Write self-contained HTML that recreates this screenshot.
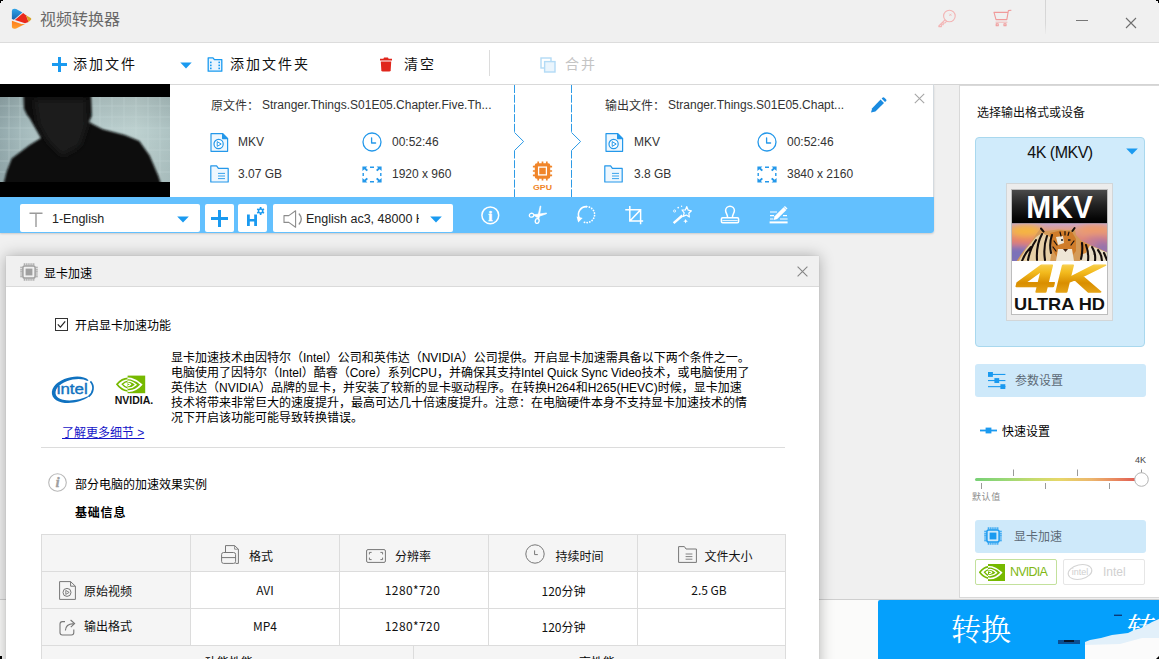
<!DOCTYPE html>
<html lang="zh-CN">
<head>
<meta charset="utf-8">
<title>视频转换器</title>
<style>
*{box-sizing:border-box;margin:0;padding:0}
html,body{width:1159px;height:659px;overflow:hidden;background:#f0f0f0}
body{position:relative;font-family:"Liberation Sans","Noto Sans CJK SC",sans-serif;font-size:12px;color:#222}
.abs{position:absolute}
.cjk{font-family:"Liberation Sans","Noto Sans CJK SC",sans-serif}
svg{display:block;overflow:visible}
/* title bar */
#titlebar{left:0;top:0;width:1159px;height:43px;background:#f0f0f0;border-bottom:1px solid #dcdcdc}
#apptitle{left:40px;top:9px;font-size:16px;color:#6a6a6a;line-height:22px;white-space:nowrap}
/* toolbar */
#toolbar{left:0;top:43px;width:1159px;height:42px;background:#fff;border-bottom:1px solid #d4d4d4}
.tbtxt{top:53px;font-size:14px;line-height:22px;color:#111;white-space:nowrap;letter-spacing:2px}
/* file item */
#item{left:0;top:85px;width:934px;height:148px;background:#fff;box-shadow:0 1px 2px rgba(0,0,0,.15);border-bottom-right-radius:3px}
#bluebar{left:0;top:197px;width:934px;height:36px;background:#63c0fe;border-bottom-right-radius:3px}
.itxt{font-size:12px;line-height:16px;color:#333;white-space:nowrap}
.wbox{background:#fff;height:28px;top:204px}
/* right panel */
#rpanel{left:959px;top:85px;width:201px;height:513px;background:#fff;border:1px solid #d9d9d9}
.lbtn{background:#cee9fa;border-radius:3px}
/* bottom */
#bottom{left:0;top:599px;width:1159px;height:60px;background:#fbfbfa;border-top:1px solid #cfcfcf}
#convert{left:878px;top:600px;width:281px;height:59px;background:#05a0fc;border-top-left-radius:2px}
/* dialog */
#dlg{left:6px;top:256px;width:813px;height:420px;background:#fff;box-shadow:0 0 14px rgba(0,0,0,.3),0 0 1px rgba(0,0,0,.12)}
#dlgtitle{left:0;top:0;width:813px;height:31px;background:#f0f0f0;border-bottom:1px solid #dadada}
.d12{font-size:12px;line-height:15px;color:#000;white-space:nowrap}
#tb1 td{width:149px;height:37px;border:1px solid #dcdcdc;text-align:center;vertical-align:middle;font-size:12px;color:#111;white-space:nowrap;background:#fff;padding:0}
#tb1 td.h{background:#f5f5f5}
#tb1 td.l{text-align:left;padding-left:17px}
#tb1 td:last-child{width:148px}
#tb1 .ic{display:inline-block;vertical-align:middle;margin-right:8px}
#tb1 span{vertical-align:middle}
#tb1 .dv{position:relative;font-family:"Noto Sans CJK SC","Liberation Sans",sans-serif}
table{border-collapse:collapse}
</style>
</head>
<body>
<!-- ===== title bar ===== -->
<div id="titlebar" class="abs"></div>
<svg class="abs" style="left:11px;top:8px" width="22" height="22" viewBox="0 0 22 22">
  <defs><linearGradient id="lgb" x1="0" y1="0" x2="0" y2="1"><stop offset="0" stop-color="#2fa4e8"/><stop offset="1" stop-color="#1a64b0"/></linearGradient>
  <linearGradient id="lgo" x1="0" y1="0" x2="0" y2="1"><stop offset="0" stop-color="#ff7a1a"/><stop offset="1" stop-color="#ffa030"/></linearGradient></defs>
  <path d="M0.9 3 Q0.9 0.9 3.4 0.8 L5.2 0.9 L11.4 4.4 L2.9 11.8 L0.9 11 Z" fill="url(#lgb)"/>
  <path d="M12.1 4.9 L15 7.2 L17.6 14 L14 15.3 L3.9 11.9 Z" fill="#ea2a1c"/>
  <path d="M15 7.2 L19.8 10 Q20.9 11 19.8 12 L17.6 14 Z" fill="#d9a428"/>
  <path d="M0.9 12.7 L10.5 16 L14 16 L5.2 20.5 Q1 21.4 0.9 19 Z" fill="url(#lgo)"/>
</svg>
<!-- key -->
<svg class="abs" style="left:938px;top:9px" width="18" height="18" viewBox="0 0 18 18" fill="none" stroke="#f3b4b4" stroke-width="1.1" stroke-linecap="round" stroke-linejoin="round">
  <circle cx="11.4" cy="7" r="5.8"/>
  <path d="M7 10.8 L0.8 17 L0.8 17.6 L3.4 17.6 L3.4 15.8 L5.2 15.8 L5.2 14 L7 14 L8.6 12.2"/>
  <path d="M11.6 5 L13.2 6.6 M13.2 5 L11.6 6.6" stroke-width="0.8"/>
</svg>
<!-- cart -->
<svg class="abs" style="left:993px;top:9px" width="19" height="18" viewBox="0 0 19 18" fill="none" stroke="#f09a9a" stroke-width="1.1" stroke-linecap="round" stroke-linejoin="round">
  <path d="M18 1.2 L15.4 1.6 L13.8 10.6 L3 10.6 L1 3.4 L14.8 3.4"/>
  <path d="M3 13.2 L14 13.2" stroke-width="0.9" stroke="#f3b0b0"/>
  <rect x="3.2" y="14.8" width="2" height="2"/>
  <rect x="11" y="14.8" width="2" height="2"/>
</svg>
<div class="abs" style="left:1045px;top:0;width:1px;height:34px;background:linear-gradient(#d4d4d4,#d8d8d8 70%,#ececec)"></div>
<div class="abs" style="left:1076px;top:20px;width:12px;height:1px;background:#777"></div>
<svg class="abs" style="left:1125px;top:17px" width="12" height="12" viewBox="0 0 12 12" stroke="#6e6e6e" stroke-width="1.1" fill="none"><path d="M1 1 L11 11 M11 1 L1 11"/></svg>
<!-- window corners -->
<div class="abs" style="left:0;top:0;width:3px;height:1px;background:#000"></div><div class="abs" style="left:0;top:0;width:1px;height:3px;background:#000"></div>
<div class="abs" style="left:1156px;top:0;width:3px;height:1px;background:#000"></div><div class="abs" style="left:1158px;top:0;width:1px;height:3px;background:#000"></div>
<div id="apptitle" class="abs">视频转换器</div>

<!-- ===== toolbar ===== -->
<div id="toolbar" class="abs"></div>
<!-- plus -->
<div class="abs" style="left:52px;top:63px;width:15px;height:3px;background:#1a9af0"></div>
<div class="abs" style="left:58px;top:57px;width:3px;height:15px;background:#1a9af0"></div>
<!-- arrow -->
<svg class="abs" style="left:180px;top:62px" width="12" height="7" viewBox="0 0 12 7"><path d="M0.3 0.6 L11.7 0.6 L6 6.4 Z" fill="#1a9af0"/></svg>
<!-- folder film -->
<svg class="abs" style="left:207px;top:57px" width="16" height="15" viewBox="0 0 16 15">
  <path d="M1.2 0.8 L6 0.8 L7.4 2.6 L14.8 2.6 L14.8 14.2 L1.2 14.2 Z" fill="#e9f5fe" stroke="#1a9af0" stroke-width="1.3" stroke-linejoin="round"/>
  <g fill="#1a9af0"><rect x="3" y="4.6" width="1.6" height="1.6"/><rect x="3" y="7.6" width="1.6" height="1.6"/><rect x="3" y="10.6" width="1.6" height="1.6"/>
  <rect x="11.4" y="4.6" width="1.6" height="1.6"/><rect x="11.4" y="7.6" width="1.6" height="1.6"/><rect x="11.4" y="10.6" width="1.6" height="1.6"/></g>
</svg>
<!-- trash -->
<svg class="abs" style="left:379px;top:57px" width="14" height="15" viewBox="0 0 14 15" fill="#e0261c">
  <path d="M4.4 1.8 L5 0.5 L9 0.5 L9.6 1.8 L13 1.8 L13 3.6 L1 3.6 L1 1.8 Z"/>
  <path d="M1.8 4.6 L12.2 4.6 L11.7 13.2 Q11.6 14.6 10.2 14.6 L3.8 14.6 Q2.4 14.6 2.3 13.2 Z"/>
</svg>
<!-- merge -->
<svg class="abs" style="left:540px;top:57px" width="16" height="16" viewBox="0 0 16 16" fill="none" stroke="#b3dbf6" stroke-width="1.4">
  <rect x="1" y="1" width="10" height="10"/><rect x="4.6" y="4.6" width="10.4" height="10.4" fill="#eaf5fd"/>
</svg>
<div class="abs tbtxt" style="left:73px">添加文件</div>
<div class="abs tbtxt" style="left:230px">添加文件夹</div>
<div class="abs tbtxt" style="left:404px">清空</div>
<div class="abs tbtxt" style="left:565px;color:#c4c4c4">合并</div>
<div class="abs" style="left:489px;top:50px;width:1px;height:26px;background:#dcdcdc"></div>

<!-- ===== file item ===== -->
<div id="item" class="abs"></div>
<!-- thumbnail -->
<svg class="abs" style="left:0;top:84px" width="170" height="113" viewBox="0 0 170 113">
  <defs><linearGradient id="tbg" x1="0" y1="0" x2="1" y2="0"><stop offset="0" stop-color="#94aaad"/><stop offset="0.12" stop-color="#a3b9bb"/><stop offset="0.24" stop-color="#b0c5c6"/><stop offset="0.55" stop-color="#b6cbcb"/><stop offset="0.8" stop-color="#bdd1d0"/><stop offset="1" stop-color="#aec3c3"/></linearGradient>
  <linearGradient id="tbv" x1="0" y1="0" x2="0" y2="1"><stop offset="0" stop-color="#000" stop-opacity="0.10"/><stop offset="0.4" stop-color="#000" stop-opacity="0"/><stop offset="1" stop-color="#000" stop-opacity="0.04"/></linearGradient>
  <filter id="tbl" x="-10%" y="-10%" width="120%" height="120%"><feGaussianBlur stdDeviation="1"/></filter>
  <filter id="tbl2" x="-20%" y="-20%" width="140%" height="140%"><feGaussianBlur stdDeviation="3"/></filter>
  <clipPath id="tclip"><rect x="0" y="13" width="170" height="85"/></clipPath></defs>
  <rect width="170" height="113" fill="#000"/>
  <g clip-path="url(#tclip)">
  <rect x="0" y="13" width="170" height="85" fill="url(#tbg)"/>
  <rect x="0" y="13" width="170" height="85" fill="url(#tbv)"/>
  <g stroke="#cfdedd" stroke-width="0.6" opacity="0.5"><path d="M0 22 H170 M0 33 H170 M0 44 H170 M0 55 H170 M0 66 H170 M0 77 H170 M0 88 H170 M9 13 V98 M20 13 V98 M100 13 V98 M112 13 V98 M124 13 V98 M136 13 V98 M148 13 V98 M160 13 V98"/></g>
  <g filter="url(#tbl)">
  <path d="M23.5 11 L24 24.7 L27 31 L29.5 34 L35.2 43.7 L41 54 L29.3 61.3 L11.7 74.5 L6.5 88 L3.6 100 L161 100 L158.4 92 L149.6 71.6 L139.3 57 L124.7 51 L102.7 45.2 L88.5 37.9 L91.7 32 L91 11 Z" fill="#0a0c0c"/>
  </g>
  <g filter="url(#tbl2)"><path d="M34 16 L86 16 L87 42 L80 62 L62 72 L48 58 L38 40 Z" fill="#1b1d1d"/></g>
  </g>
</svg>
<div class="abs" style="left:170px;top:84px;width:764px;height:1px;background:#d9d9d9"></div>
<div class="abs" style="left:933px;top:84px;width:1px;height:113px;background:#d4dadf"></div>
<!-- source -->
<div class="abs itxt" style="left:211px;top:98px">原文件：</div>
<div class="abs itxt" style="left:262px;top:97px">Stranger.Things.S01E05.Chapter.Five.Th...</div>
<svg class="abs" style="left:210px;top:133px" width="19" height="19" viewBox="0 0 19 19" fill="none" stroke="#2498ea" stroke-width="1.2" stroke-linejoin="round">
  <path d="M1 0.7 L12.6 0.7 L17.6 5.6 L17.6 18.3 L1 18.3 Z" fill="#eef7fe"/><path d="M12.6 0.7 L12.6 5.6 L17.6 5.6 Z" fill="#2498ea"/>
  <circle cx="8.6" cy="11" r="4.6" fill="#fff"/><path d="M7.2 8.6 L11.2 11 L7.2 13.4 Z" stroke-width="1"/></svg>
<div class="abs itxt" style="left:238px;top:134px">MKV</div>
<svg class="abs" style="left:362px;top:132px" width="20" height="20" viewBox="0 0 20 20" fill="none" stroke="#2498ea" stroke-width="1.3" stroke-linecap="round" stroke-linejoin="round">
  <circle cx="10" cy="10" r="9"/><path d="M9.6 5.8 L9.6 11 L13.6 11"/></svg>
<div class="abs itxt" style="left:392px;top:134px">00:52:46</div>
<svg class="abs" style="left:210px;top:165px" width="19" height="18" viewBox="0 0 19 18" fill="none" stroke="#2498ea" stroke-width="1.2" stroke-linejoin="round">
  <path d="M0.8 0.8 L6.6 0.8 L8.4 3.4 L18.2 3.4 L18.2 17 L0.8 17 Z" fill="#eef7fe"/>
  <path d="M8 8.4 L15 8.4 M8 11 L15 11 M8 13.6 L15 13.6" stroke-width="0.9"/></svg>
<div class="abs itxt" style="left:238px;top:166px">3.07 GB</div>
<svg class="abs" style="left:362px;top:166px" width="20" height="17" viewBox="0 0 20 17" fill="none" stroke="#2498ea" stroke-width="1.4">
  <path d="M8 1.2 L12 1.2 M8 15.8 L12 15.8 M1.2 7 L1.2 10 M18.8 7 L18.8 10"/>
  <g fill="#2498ea" stroke="none"><path d="M0.4 0.4 L5.4 0.4 L3.9 1.9 L6 4 L4.6 5.2 L2.4 3.2 L0.4 5 Z"/>
  <path d="M19.6 0.4 L14.6 0.4 L16.1 1.9 L14 4 L15.4 5.2 L17.6 3.2 L19.6 5 Z"/>
  <path d="M0.4 16.6 L5.4 16.6 L3.9 15.1 L6 13 L4.6 11.8 L2.4 13.8 L0.4 12 Z"/>
  <path d="M19.6 16.6 L14.6 16.6 L16.1 15.1 L14 13 L15.4 11.8 L17.6 13.8 L19.6 12 Z"/></g></svg>
<div class="abs itxt" style="left:392px;top:166px">1920 x 960</div>
<!-- dashed separators -->
<svg class="abs" style="left:510px;top:85px" width="80" height="112" viewBox="0 0 80 112" fill="none" stroke="#2e9be6" stroke-width="1">
  <path d="M4.5 0 V47.5 M4.5 65.5 V112" stroke-dasharray="8 1.7"/><path d="M4.5 47.5 L13.6 56.5 L4.5 65.5"/>
  <path d="M61.5 0 V47.5 M61.5 65.5 V112" stroke-dasharray="8 1.7"/><path d="M61.5 47.5 L70.6 56.5 L61.5 65.5"/>
</svg>
<!-- GPU -->
<svg class="abs" style="left:532px;top:161px" width="21" height="30" viewBox="0 0 21 30">
  <g stroke="#f0852a" stroke-width="1.7" fill="none"><path d="M6.2 0.4 V3 M10.5 0.4 V3 M14.8 0.4 V3 M6.2 17 V19.6 M10.5 17 V19.6 M14.8 17 V19.6 M0.9 5.7 H3.5 M0.9 10 H3.5 M0.9 14.3 H3.5 M17.5 5.7 H20.1 M17.5 10 H20.1 M17.5 14.3 H20.1"/></g>
  <rect x="2.8" y="2.3" width="15.4" height="15.4" rx="2" fill="#f0852a"/><rect x="6.6" y="6.1" width="7.8" height="7.8" fill="#f0852a" stroke="#fff" stroke-width="1.3"/>
  <text x="10.5" y="28.8" text-anchor="middle" font-family="Liberation Sans, sans-serif" font-weight="bold" font-size="7.6" fill="#f0852a" textLength="19" lengthAdjust="spacingAndGlyphs">GPU</text>
</svg>
<!-- output -->
<div class="abs itxt" style="left:605px;top:98px">输出文件：</div>
<div class="abs itxt" style="left:668px;top:97px">Stranger.Things.S01E05.Chapt...</div>
<svg class="abs" style="left:870px;top:97px" width="17" height="16" viewBox="0 0 17 16" fill="#1a8be0">
  <path d="M10.6 2.6 L14 6 L5.4 14.4 L1 15.6 L2.2 11.2 Z"/><path d="M11.6 1.6 L12.8 0.5 Q13.6 0 14.4 0.7 L16.2 2.5 Q16.8 3.3 16.2 4 L15 5 Z"/></svg>
<svg class="abs" style="left:913.5px;top:93.3px" width="11" height="11" viewBox="0 0 11 11" stroke="#a6a6a6" stroke-width="1.1" fill="none"><path d="M0.8 0.8 L10.2 10.2 M10.2 0.8 L0.8 10.2"/></svg>
<svg class="abs" style="left:605px;top:133px" width="19" height="19" viewBox="0 0 19 19" fill="none" stroke="#2498ea" stroke-width="1.2" stroke-linejoin="round">
  <path d="M1 0.7 L12.6 0.7 L17.6 5.6 L17.6 18.3 L1 18.3 Z" fill="#eef7fe"/><path d="M12.6 0.7 L12.6 5.6 L17.6 5.6 Z" fill="#2498ea"/>
  <circle cx="8.6" cy="11" r="4.6" fill="#fff"/><path d="M7.2 8.6 L11.2 11 L7.2 13.4 Z" stroke-width="1"/></svg>
<div class="abs itxt" style="left:634px;top:134px">MKV</div>
<svg class="abs" style="left:757px;top:132px" width="20" height="20" viewBox="0 0 20 20" fill="none" stroke="#2498ea" stroke-width="1.3" stroke-linecap="round" stroke-linejoin="round">
  <circle cx="10" cy="10" r="9"/><path d="M9.6 5.8 L9.6 11 L13.6 11"/></svg>
<div class="abs itxt" style="left:787px;top:134px">00:52:46</div>
<svg class="abs" style="left:604px;top:165px" width="19" height="18" viewBox="0 0 19 18" fill="none" stroke="#2498ea" stroke-width="1.2" stroke-linejoin="round">
  <path d="M0.8 0.8 L6.6 0.8 L8.4 3.4 L18.2 3.4 L18.2 17 L0.8 17 Z" fill="#eef7fe"/>
  <path d="M8 8.4 L15 8.4 M8 11 L15 11 M8 13.6 L15 13.6" stroke-width="0.9"/></svg>
<div class="abs itxt" style="left:634px;top:166px">3.8 GB</div>
<svg class="abs" style="left:757px;top:166px" width="20" height="17" viewBox="0 0 20 17" fill="none" stroke="#2498ea" stroke-width="1.4">
  <path d="M8 1.2 L12 1.2 M8 15.8 L12 15.8 M1.2 7 L1.2 10 M18.8 7 L18.8 10"/>
  <g fill="#2498ea" stroke="none"><path d="M0.4 0.4 L5.4 0.4 L3.9 1.9 L6 4 L4.6 5.2 L2.4 3.2 L0.4 5 Z"/>
  <path d="M19.6 0.4 L14.6 0.4 L16.1 1.9 L14 4 L15.4 5.2 L17.6 3.2 L19.6 5 Z"/>
  <path d="M0.4 16.6 L5.4 16.6 L3.9 15.1 L6 13 L4.6 11.8 L2.4 13.8 L0.4 12 Z"/>
  <path d="M19.6 16.6 L14.6 16.6 L16.1 15.1 L14 13 L15.4 11.8 L17.6 13.8 L19.6 12 Z"/></g></svg>
<div class="abs itxt" style="left:787px;top:166px">3840 x 2160</div>
<div id="bluebar" class="abs"></div>
<div class="abs wbox" style="left:20px;width:180px;border-radius:2px"></div>
<svg class="abs" style="left:29px;top:212px" width="14" height="15" viewBox="0 0 14 15" fill="none" stroke="#9a9a9a" stroke-width="1.4"><path d="M0.5 1.2 H13.5 M7 1.2 V15"/></svg>
<div class="abs" style="left:52px;top:211px;font-size:12.5px;line-height:16px;color:#222;white-space:nowrap">1-English</div>
<svg class="abs" style="left:177px;top:216px" width="12" height="7" viewBox="0 0 12 7"><path d="M0.2 0.6 L11.8 0.6 L6 6.6 Z" fill="#1a9af0"/></svg>
<div class="abs wbox" style="left:205px;width:29px;border-radius:2px"></div>
<div class="abs" style="left:211px;top:217px;width:17px;height:3px;background:#1a9af0"></div>
<div class="abs" style="left:218px;top:210px;width:3px;height:17px;background:#1a9af0"></div>
<div class="abs wbox" style="left:238px;width:29px;border-radius:2px"></div>
<svg class="abs" style="left:246px;top:206px" width="20" height="21" viewBox="0 0 20 21">
  <path d="M1 8.6 H3.8 V13 H8.2 V8.6 H11 V20 H8.2 V15.4 H3.8 V20 H1 Z" fill="#1a9af0"/>
  <g transform="translate(14.6,5)" fill="#1a9af0"><circle r="2.8"/><g stroke="#1a9af0" stroke-width="1.7"><path d="M0 -3.9 V3.9 M-3.38 -1.95 L3.38 1.95 M-3.38 1.95 L3.38 -1.95"/></g><circle r="1.35" fill="#fff"/></g>
</svg>
<div class="abs wbox" style="left:273px;width:180px;border-radius:2px"></div>
<svg class="abs" style="left:283px;top:210px" width="22" height="18" viewBox="0 0 22 18" fill="none" stroke="#8c8c8c" stroke-width="1.1" stroke-linejoin="round"><path d="M1 5.6 H5.8 L12.6 0.8 V17.2 L5.8 12.4 H1 Z"/><path d="M16.2 4 Q20.4 9 16.2 14" stroke-linecap="round" stroke-width="1.3"/></svg>
<div class="abs" style="left:306px;top:211px;width:113px;overflow:hidden;font-size:12.5px;line-height:16px;color:#222;white-space:nowrap">English ac3, 48000 Hz</div>
<svg class="abs" style="left:430px;top:216px" width="12" height="7" viewBox="0 0 12 7"><path d="M0.2 0.6 L11.8 0.6 L6 6.6 Z" fill="#1a9af0"/></svg>
<!-- bar icons -->
<svg class="abs" style="left:481px;top:206px" width="19" height="19" viewBox="0 0 19 19"><circle cx="9.3" cy="9.3" r="8.4" fill="none" stroke="#fff" stroke-width="1.5"/><text x="9.3" y="14.6" text-anchor="middle" font-family="Liberation Serif, serif" font-weight="bold" font-size="15" fill="#fff" stroke="#fff" stroke-width="0.5">i</text></svg>
<svg class="abs" style="left:528px;top:205px" width="20" height="20" viewBox="0 0 20 20" fill="none" stroke="#fff" stroke-width="1.3"><ellipse cx="3.6" cy="10.2" rx="2.3" ry="1.9" transform="rotate(-15 3.6 10.2)"/><ellipse cx="9.2" cy="16" rx="1.9" ry="2.4" transform="rotate(15 9.2 16)"/><path d="M5.6 9.8 L18.6 8 L18.4 8.8 L8.6 12.2 Z M9.4 13.8 L12.2 1 L12.9 1.2 L11 13.6 Z" fill="#fff" stroke-width="0.7" stroke-linejoin="round"/></svg>
<svg class="abs" style="left:576px;top:205px" width="20" height="20" viewBox="0 0 20 20" fill="none" stroke="#fff" stroke-width="1.6" stroke-linecap="round"><path d="M10.6 1.6 A8 8 0 0 0 3.4 13.4"/><path d="M10.6 1.6 A8 8 0 0 1 10.6 17.6 A8 8 0 0 1 7.6 17" stroke-dasharray="0.2 2.5" stroke-width="1.7"/><path d="M0.6 11.6 L6.6 13 L2.2 17.4 Z" fill="#fff" stroke="none"/></svg>
<svg class="abs" style="left:625px;top:206px" width="19" height="19" viewBox="0 0 19 19" fill="none" stroke="#fff" stroke-width="1.5" stroke-linecap="square"><path d="M4.8 0.8 V15 H17.4 M1 3.8 H15.6 V17.6 M5.4 14.4 L15 4.4"/></svg>
<svg class="abs" style="left:672px;top:205px" width="20" height="20" viewBox="0 0 20 20" fill="#fff" stroke="none"><path d="M0.8 17.2 L9.6 9.6 L11.2 11.4 L2.4 19 Z"/><path d="M14.8 1.6 L16.2 5.2 L19.4 5.8 L16.8 8.2 L17.4 12 L14.4 10 L11.2 11.4 L12.2 7.8 L10 5 L13.4 5 Z" fill="none" stroke="#fff" stroke-width="1.2" stroke-linejoin="round"/><circle cx="6.2" cy="2.6" r="0.9"/><circle cx="2.6" cy="6" r="1.1" fill="none" stroke="#fff" stroke-width="0.8"/><circle cx="9.6" cy="1.2" r="0.7"/><path d="M13.6 14 L14.4 15.6 L16 16.2 L14.4 16.8 L13.6 18.4 L12.8 16.8 L11.2 16.2 L12.8 15.6 Z"/></svg>
<svg class="abs" style="left:720px;top:205px" width="20" height="20" viewBox="0 0 20 20" fill="none" stroke="#fff" stroke-width="1.5" stroke-linejoin="round"><path d="M7.4 12.8 C8.2 9.6 5.6 8.8 5.6 5.6 A4.4 4.4 0 0 1 14.4 5.6 C14.4 8.8 11.8 9.6 12.6 12.8"/><rect x="1.4" y="12.8" width="17.2" height="5" rx="1.2"/><path d="M2.4 15.6 H17.6" stroke-width="0.9"/></svg>
<svg class="abs" style="left:769px;top:205px" width="20" height="20" viewBox="0 0 20 20" fill="none" stroke="#fff" stroke-width="1.2"><path d="M0.6 17.4 H18.6" stroke-width="2"/><path d="M1 7 H8 M1 10.6 H5 M1 14 H4.4 M14 10.6 H18 M11 14 H18.6"/><path d="M14.6 2.2 L17.4 5 L8.2 14 L4.6 15 L5.6 11.2 Z" fill="#fff" stroke="none"/><path d="M15.4 1.4 L18 4" stroke-width="1.4"/></svg>
<!-- ===== right panel ===== -->
<div id="rpanel" class="abs"></div>
<div class="abs d12" style="left:977px;top:106px;color:#111">选择输出格式或设备</div>
<div class="abs" style="left:975px;top:137px;width:170px;height:210px;background:#d0ebfb;border:1px solid #a9d8ee;border-radius:4px"></div>
<div class="abs" style="left:1010px;top:143px;width:100px;text-align:center;font-size:16px;line-height:20px;letter-spacing:-0.5px;color:#111;white-space:nowrap">4K (MKV)</div>
<svg class="abs" style="left:1126px;top:148px" width="12" height="7" viewBox="0 0 12 7"><path d="M0.2 0.4 L11.8 0.4 L6 6.4 Z" fill="#1a9af0"/></svg>
<!-- MKV 4K icon -->
<svg class="abs" style="left:1006px;top:183px" width="107" height="138" viewBox="0 0 107 138">
  <defs>
    <linearGradient id="mk" x1="0" y1="0" x2="0" y2="1"><stop offset="0" stop-color="#4a4a4a"/><stop offset="0.45" stop-color="#222"/><stop offset="0.85" stop-color="#060606"/><stop offset="1" stop-color="#000"/></linearGradient>
    <linearGradient id="sky" x1="0" y1="0" x2="0" y2="1"><stop offset="0" stop-color="#c8a4cc"/><stop offset="0.15" stop-color="#e0a08c"/><stop offset="0.4" stop-color="#e08878"/><stop offset="0.65" stop-color="#b07aa0"/><stop offset="1" stop-color="#8a74b4"/></linearGradient>
    <linearGradient id="gold" x1="0" y1="0" x2="0" y2="1"><stop offset="0" stop-color="#fbe27a"/><stop offset="0.35" stop-color="#f3bb1e"/><stop offset="0.6" stop-color="#d98e00"/><stop offset="1" stop-color="#f0b62a"/></linearGradient>
    <filter id="b1" x="-10%" y="-10%" width="120%" height="120%"><feGaussianBlur stdDeviation="0.45"/></filter><filter id="b2" x="-30%" y="-30%" width="160%" height="160%"><feGaussianBlur stdDeviation="3"/></filter>
  </defs>
  <rect x="0.5" y="0.5" width="106" height="137" fill="#ececec" stroke="#d2d6d8"/>
  <rect x="5.5" y="6.5" width="96" height="125" fill="#fff" stroke="#bdbdbd"/>
  <rect x="6" y="7" width="95" height="33.5" fill="url(#mk)"/>
  <text x="53.5" y="34.6" text-anchor="middle" font-family="Liberation Sans, sans-serif" font-weight="bold" font-size="31" fill="#fff" textLength="66.5" lengthAdjust="spacingAndGlyphs">MKV</text>
  <rect x="6" y="40.5" width="95" height="37.5" fill="url(#sky)"/>
  <clipPath id="tgc"><rect x="6" y="40.5" width="95" height="37.5"/></clipPath>
  <g clip-path="url(#tgc)">
  <g filter="url(#b2)">
    <ellipse cx="20" cy="48" rx="16" ry="6" fill="#f6b640"/>
    <ellipse cx="16" cy="58" rx="14" ry="4" fill="#e8806a"/>
    <ellipse cx="12" cy="72" rx="14" ry="9" fill="#7c72b8"/>
    <ellipse cx="88" cy="47" rx="16" ry="5" fill="#ee9a6a"/>
    <ellipse cx="92" cy="57" rx="12" ry="4" fill="#c07a98"/>
    <ellipse cx="97" cy="64" rx="8" ry="4" fill="#8a72b0"/>
  </g>
  <g filter="url(#b1)">
    <path d="M10 79 L16 70 L24 60 L31 50 L35 45 L37.5 48 L44 47.5 L52 46.5 L60 47 L66 47 L68.6 44.6 L70 52 L76 58 L84 62 L94 66 L102 70 L102 79 Z" fill="#d49a58"/>
    <path d="M12 79 L20 66 L30 54 L36 50 L44 54 L46 66 L44 79 Z" fill="#e6cfa6"/>
    <path d="M44 50 L54 47.5 L66 49 L70 56 L70 68 L64 76 L52 76 L46 66 Z" fill="#cf7c2c"/>
    <path d="M50 54 L57 53 L58 60 L52 62 Z M52 66 L66 66 L68 78 L50 78 Z" fill="#efe6d6"/>
    <path d="M78 60 L102 70 L102 79 L74 79 Z" fill="#e8dcc6"/>
    <path d="M74 58 L84 62 L80 70 L74 72 Z" fill="#d98a3a"/>
    <g stroke="#15100c" stroke-width="2.1" fill="none" stroke-linecap="round">
      <path d="M36 51 Q30 62 31 77 M41 53 Q37 64 39 77 M30 57 Q24 66 22 77 M25 64 Q19 70 16 78 M46 52 Q43 60 45 70"/>
      <path d="M80 62 Q83 70 82 78 M86 64 Q90 70 89 78 M92 67 Q96 72 96 78 M98 70 L101 77 M76 60 Q77 68 75 76"/>
      <path d="M35 45.5 L37.6 48.6 M68.6 45 L66.4 48" stroke-width="2"/>
      <path d="M54 49 L55 53 M59 48.5 L59 52 M63 49 L62 52.5 M48 58 L51 62 M68 58 L65 62 M47 64 L50 68" stroke-width="1.2"/>
    </g>
    <path d="M55 57 L57 57 M62 57 L64.5 57" stroke="#1a1a1a" stroke-width="1.4"/>
    <path d="M57 66 L62 66 L59.5 69 Z" fill="#3a2018"/>
  </g>
  </g>
  <rect x="6" y="78" width="95" height="53" fill="#fff"/>
  <g transform="translate(51.6,109) scale(1.74,1) skewX(-8)"><text x="0" y="0" text-anchor="middle" font-family="Liberation Sans, sans-serif" font-weight="bold" font-size="39" fill="url(#gold)" stroke="url(#gold)" stroke-width="1.3" stroke-linejoin="round">4K</text></g>
  <text x="53.5" y="127.4" text-anchor="middle" font-family="Liberation Sans, sans-serif" font-weight="bold" font-size="16.4" fill="#111" textLength="91" lengthAdjust="spacingAndGlyphs">ULTRA HD</text>
</svg>
<!-- param settings -->
<div class="abs lbtn" style="left:975px;top:364px;width:171px;height:33px"></div>
<svg class="abs" style="left:988px;top:372px" width="18" height="17" viewBox="0 0 18 17" fill="#1a9af0"><rect x="0" y="1.9" width="17.4" height="1.1"/><rect x="0" y="8" width="17.4" height="1.1"/><rect x="0" y="14.1" width="17.4" height="1.1"/><rect x="0" y="0" width="4.9" height="4.9"/><rect x="6.4" y="6.1" width="4.8" height="4.9"/><rect x="12.4" y="12.2" width="4.9" height="4.8"/></svg>
<div class="abs d12" style="left:1015px;top:374px;color:#5c6a76">参数设置</div>
<!-- quick settings -->
<svg class="abs" style="left:980px;top:426px" width="17" height="9" viewBox="0 0 17 9" fill="#1a9af0"><rect x="0" y="3.6" width="17" height="1.8"/><rect x="5.6" y="1.6" width="5.8" height="5.8"/></svg>
<div class="abs d12" style="left:1002px;top:425px;color:#000">快速设置</div>
<div class="abs" style="left:1135px;top:454px;font-size:9px;line-height:12px;color:#444;white-space:nowrap">4K</div>
<div class="abs" style="left:975px;top:478px;width:161px;height:3px;border-radius:2px;background:linear-gradient(90deg,#6ccc6a 0%,#8fd46a 18%,#c4d860 38%,#e4d45c 52%,#eab060 72%,#e67a50 88%,#de4e44 100%);opacity:.92"></div>
<svg class="abs" style="left:975px;top:468px" width="176" height="24" viewBox="0 0 176 24" stroke="#9a9a9a" stroke-width="1" fill="none"><path d="M38.5 1.5 V8 M102.5 1.5 V8 M166.5 1.5 V5 M6.5 15 V21 M70.5 15 V21 M134.5 15 V21"/><circle cx="166.5" cy="11.5" r="6.8" fill="#fff" stroke="#b4b4b4"/></svg>
<div class="abs" style="left:972px;top:491px;font-size:9px;line-height:12px;color:#8a8a8a;white-space:nowrap;letter-spacing:0.6px">默认值</div>
<!-- gpu accel -->
<div class="abs lbtn" style="left:975px;top:520px;width:171px;height:33px"></div>
<svg class="abs" style="left:983.5px;top:527.2px" width="18" height="18" viewBox="0 0 18 18"><path d="M4.30 0.2 V2.6 M4.30 15.4 V17.8 M0.2 4.30 H2.6 M15.4 4.30 H17.8 M6.20 0.2 V2.6 M6.20 15.4 V17.8 M0.2 6.20 H2.6 M15.4 6.20 H17.8 M8.10 0.2 V2.6 M8.10 15.4 V17.8 M0.2 8.10 H2.6 M15.4 8.10 H17.8 M10.00 0.2 V2.6 M10.00 15.4 V17.8 M0.2 10.00 H2.6 M15.4 10.00 H17.8 M11.90 0.2 V2.6 M11.90 15.4 V17.8 M0.2 11.90 H2.6 M15.4 11.90 H17.8 M13.80 0.2 V2.6 M13.80 15.4 V17.8 M0.2 13.80 H2.6 M15.4 13.80 H17.8 " stroke="#1a9af0" stroke-width="1.05" fill="none"/><rect x="2.9" y="2.9" width="12.2" height="12.2" rx="1.8" fill="#cee9fa" stroke="#1a9af0" stroke-width="1.5"/><rect x="5.6" y="5.6" width="6.8" height="6.8" fill="#1a9af0"/></svg>
<div class="abs d12" style="left:1014px;top:530px;color:#5c6a76">显卡加速</div>
<div class="abs" style="left:975px;top:559px;width:82px;height:26px;background:#fff;border:1px solid #c3e19c;border-radius:2px"></div>
<svg class="abs" style="left:979px;top:564px" width="26" height="17" viewBox="0 0 26 17">
  <defs><clipPath id="nvL2"><rect x="0" y="0" width="9" height="17"/></clipPath><clipPath id="nvR2"><rect x="9" y="0" width="17" height="17"/></clipPath>
  </defs>
  <rect x="9" y="0" width="17" height="17" fill="#76b900"/>
  <g fill="none" stroke="#76b900" clip-path="url(#nvL2)"><path d="M0.8 8.2 Q6 1.6 13 3 Q18.4 4.4 22.4 8.6 Q16.6 15 10.4 14.4 Q4.4 13.4 0.8 8.2 Z" stroke-width="1.6"/><path d="M5.4 8.2 Q8.8 4.8 12.6 5.6 Q15.4 6.4 17.6 8.8 Q14 11.9 10.4 11.6 Q7.4 11 5.4 8.2 Z" stroke-width="1.3"/><path d="M9.6 7.4 Q11.8 6.8 12.8 8.4 Q11.8 9.8 10 9.5" stroke-width="1.2"/></g>
  <g fill="none" stroke="#fff" clip-path="url(#nvR2)"><path d="M0.8 8.2 Q6 1.6 13 3 Q18.4 4.4 22.4 8.6 Q16.6 15 10.4 14.4 Q4.4 13.4 0.8 8.2 Z" stroke-width="1.6"/><path d="M5.4 8.2 Q8.8 4.8 12.6 5.6 Q15.4 6.4 17.6 8.8 Q14 11.9 10.4 11.6 Q7.4 11 5.4 8.2 Z" stroke-width="1.3"/><path d="M9.6 7.4 Q11.8 6.8 12.8 8.4 Q11.8 9.8 10 9.5" stroke-width="1.2"/></g>
</svg>
<div class="abs" style="left:1010px;top:565px;font-size:12.5px;line-height:15px;color:#80b814;letter-spacing:-0.75px;white-space:nowrap">NVIDIA</div>
<div class="abs" style="left:1063px;top:559px;width:82px;height:26px;background:#fff;border:1px solid #e6e6e6;border-radius:2px"></div>
<svg class="abs" style="left:1067px;top:563px" width="26" height="18" viewBox="0 0 26 18"><ellipse cx="13" cy="9" rx="12" ry="7.2" fill="none" stroke="#d4d4d4" stroke-width="1.1" transform="rotate(-12 13 9)"/><text x="13" y="12" text-anchor="middle" font-family="Liberation Sans, sans-serif" font-size="9" fill="#cfcfcf">intel</text></svg>
<div class="abs" style="left:1103px;top:565px;font-size:12px;line-height:15px;color:#d0d0d0;white-space:nowrap">Intel</div>

<!-- ===== bottom ===== -->
<div id="bottom" class="abs"></div>
<div id="convert" class="abs"></div>
<div class="abs" style="left:951px;top:610px;font-family:'Liberation Serif','Noto Serif CJK SC',serif;font-size:30px;line-height:40px;color:#fff;white-space:nowrap;letter-spacing:0px">转换</div>

<!-- glitch artifacts bottom-right -->
<div class="abs" style="left:1126px;top:609px;width:33px;height:40px;overflow:hidden;font-family:'Liberation Serif','Noto Serif CJK SC',serif;font-size:30px;line-height:40px;color:#fff;white-space:nowrap"><span style="display:inline-block;transform:skewX(-8deg)">转换</span></div>
<svg class="abs" style="left:1050px;top:610px" width="109" height="49" viewBox="0 0 109 49">
  <path d="M35 32 L40 30 L51 28 L62 25 L78 23 L84 20 L91 18 L97 15 L102 12 L109 9 L109 49 L35 49 Z" fill="#e2f0fa"/>
  <path d="M35 35 L70 34 L92 28 L109 28 L109 49 L35 49 Z" fill="#fbfbfb"/>
  <rect x="8" y="30" width="22" height="4" fill="#0b3a78" opacity="0.8"/><rect x="14" y="30" width="10" height="2" fill="#04142c"/>
  <rect x="64" y="4.6" width="8" height="1.4" fill="#0b3a78"/>
  <path d="M106 49 L109 46 L109 49 Z" fill="#000"/>
</svg>
<div class="abs" style="left:0;top:656px;width:2px;height:3px;background:#000"></div>
<!-- ===== dialog ===== -->
<div id="dlg" class="abs">
  <div id="dlgtitle" class="abs"></div>
  <svg class="abs" style="left:14px;top:6.8px" width="18" height="18" viewBox="0 0 18 18"><path d="M4.30 0.2 V2.6 M4.30 15.4 V17.8 M0.2 4.30 H2.6 M15.4 4.30 H17.8 M6.20 0.2 V2.6 M6.20 15.4 V17.8 M0.2 6.20 H2.6 M15.4 6.20 H17.8 M8.10 0.2 V2.6 M8.10 15.4 V17.8 M0.2 8.10 H2.6 M15.4 8.10 H17.8 M10.00 0.2 V2.6 M10.00 15.4 V17.8 M0.2 10.00 H2.6 M15.4 10.00 H17.8 M11.90 0.2 V2.6 M11.90 15.4 V17.8 M0.2 11.90 H2.6 M15.4 11.90 H17.8 M13.80 0.2 V2.6 M13.80 15.4 V17.8 M0.2 13.80 H2.6 M15.4 13.80 H17.8 " stroke="#a0a0a0" stroke-width="1.05" fill="none"/><rect x="2.9" y="2.9" width="12.2" height="12.2" rx="1.8" fill="#f0f0f0" stroke="#a0a0a0" stroke-width="1.5"/><rect x="5.6" y="5.6" width="6.8" height="6.8" fill="#a0a0a0"/></svg>
  <div class="abs d12" style="left:38px;top:11px">显卡加速</div>
  <svg class="abs" style="left:791px;top:10px" width="11" height="11" viewBox="0 0 11 11" stroke="#858585" stroke-width="1.1" fill="none"><path d="M0.6 0.6 L10.4 10.4 M10.4 0.6 L0.6 10.4"/></svg>
  <!-- checkbox -->
  <div class="abs" style="left:49px;top:62px;width:13px;height:13px;border:1px solid #333;background:#fff"></div>
  <svg class="abs" style="left:49px;top:62px" width="13" height="13" viewBox="0 0 13 13" fill="none" stroke="#222" stroke-width="1.2"><path d="M2.8 6.4 L5.4 9.2 L10.2 3.4"/></svg>
  <div class="abs d12" style="left:69px;top:63px">开启显卡加速功能</div>
  <!-- logos -->
  <svg class="abs" style="left:44px;top:119px" width="46" height="30" viewBox="0 0 46 30">
    <path d="M38.6 5.2 C32 -1.6 12 1.4 4 11.4 C-1 18.4 3 25.4 12 27.4 C21 29.2 32 26.6 39 21.6 L38.4 21 C31 24.8 21 26.4 13 24.8 C6 23.2 3.4 18.4 7.4 12.6 C13.6 4.4 31 1.6 37.4 6 Z" fill="#1072c0"/>
    <path d="M40.4 6.4 C44.6 11 43.6 17.6 38.6 21.6" fill="none" stroke="#1072c0" stroke-width="1.7"/>
    <text x="22.2" y="19.4" text-anchor="middle" font-family="Liberation Sans, sans-serif" font-size="15.5" fill="#1072c0" stroke="#1072c0" stroke-width="0.4" textLength="31" lengthAdjust="spacingAndGlyphs">intel</text>
  </svg>
  <svg class="abs" style="left:108px;top:119px" width="40" height="30" viewBox="0 0 40 30">
    <defs><clipPath id="nvL"><rect x="0" y="0" width="13.6" height="20"/></clipPath><clipPath id="nvR"><rect x="13.6" y="0.6" width="17.6" height="17.6"/></clipPath>
    </defs>
    <rect x="13.6" y="0.6" width="17.6" height="17.6" fill="#76b900"/>
    <g fill="none" stroke="#76b900" clip-path="url(#nvL)"><path d="M3 9.2 Q9 2 17 3.6 Q23 5.2 27.4 9.6 Q21 16.6 14 16 Q7 15 3 9.2 Z" stroke-width="1.7"/><path d="M8.2 9.2 Q12 5.4 16.4 6.4 Q19.6 7.4 22 9.8 Q18 13.4 14 13 Q10.6 12.4 8.2 9.2 Z" stroke-width="1.4"/><path d="M13 8.2 Q15.4 7.6 16.6 9.4 Q15.4 11 13.4 10.6" stroke-width="1.3"/></g>
    <g fill="none" stroke="#fff" clip-path="url(#nvR)"><path d="M3 9.2 Q9 2 17 3.6 Q23 5.2 27.4 9.6 Q21 16.6 14 16 Q7 15 3 9.2 Z" stroke-width="1.7"/><path d="M8.2 9.2 Q12 5.4 16.4 6.4 Q19.6 7.4 22 9.8 Q18 13.4 14 13 Q10.6 12.4 8.2 9.2 Z" stroke-width="1.4"/><path d="M13 8.2 Q15.4 7.6 16.6 9.4 Q15.4 11 13.4 10.6" stroke-width="1.3"/></g>
    <text x="20" y="29" text-anchor="middle" font-family="Liberation Sans, sans-serif" font-weight="bold" font-size="10" fill="#111" textLength="38.5" lengthAdjust="spacingAndGlyphs">NVIDIA.</text>
  </svg>
  <div class="abs d12" style="left:56px;top:170px;color:#1515c8;text-decoration:underline;text-underline-offset:1px">了解更多细节 &gt;</div>
  <!-- paragraph -->
  <div class="abs d12" style="left:165px;top:95px">显卡加速技术由因特尔（Intel）公司和英伟达（NVIDIA）公司提供。开启显卡加速需具备以下两个条件之一。<br>电脑使用了因特尔（Intel）酷睿（Core）系列CPU，并确保其支持Intel Quick Sync Video技术，或电脑使用了<br>英伟达（NVIDIA）品牌的显卡，并安装了较新的显卡驱动程序。在转换H264和H265(HEVC)时候，显卡加速<br>技术将带来非常巨大的速度提升，最高可达几十倍速度提升。注意：在电脑硬件本身不支持显卡加速技术的情<br>况下开启该功能可能导致转换错误。</div>
  <div class="abs" style="left:35px;top:191px;width:744px;height:1px;background:#dcdcdc"></div>
  <!-- section 2 -->
  <svg class="abs" style="left:42px;top:217px" width="19" height="19" viewBox="0 0 19 19"><circle cx="9.5" cy="9.5" r="8.8" fill="#fff" stroke="#b8b8b8" stroke-width="1.1"/><text x="9.7" y="14.4" text-anchor="middle" font-family="Liberation Serif, serif" font-style="italic" font-weight="bold" font-size="15" fill="#a0a0a0" stroke="#a0a0a0" stroke-width="0.3">i</text></svg>
  <div class="abs d12" style="left:69px;top:222px">部分电脑的加速效果实例</div>
  <div class="abs d12" style="left:69px;top:250px;font-weight:bold;letter-spacing:0.8px">基础信息</div>
  <table class="abs" id="tb1" style="left:35px;top:278px">
    <tr><td class="h"></td><td class="h" style="text-align:left;padding-left:30px"><span class="ic" style="margin-right:10px;position:relative;top:1px"><svg width="18" height="19" viewBox="0 0 18 19" fill="none" stroke="#777" stroke-width="1"><path d="M4.5 7.5 V0.6 H13.6 L17.4 4.2 V18.4 H14.6"/><path d="M13.6 0.6 V4.2 H17.4" stroke-width="0.8"/><rect x="0.6" y="7.5" width="14" height="10.9" rx="2" fill="#f5f5f5"/><path d="M0.6 12.6 H14.6"/></svg></span><span style="position:relative;top:2px">格式</span></td><td class="h" style="text-align:left;padding-left:25.5px"><span class="ic" style="margin-right:9.5px;position:relative;top:3px"><svg width="20" height="14" viewBox="0 0 20 14" fill="none" stroke="#777" stroke-width="1"><rect x="0.6" y="0.6" width="18.8" height="12.8" rx="1.4"/><path d="M3.4 5.4 V3.4 H5.6 M14.4 3.4 H16.6 V5.4 M16.6 8.6 V10.6 H14.4 M5.6 10.6 H3.4 V8.6"/></svg></span><span style="position:relative;top:2px">分辨率</span></td><td class="h" style="text-align:left;padding-left:35.5px"><span class="ic" style="margin-right:11px;position:relative;top:1px"><svg width="20" height="20" viewBox="0 0 20 20" fill="none" stroke="#777" stroke-width="1"><circle cx="10" cy="10" r="9.2"/><path d="M9.6 6.4 V10.6 H12.8"/></svg></span><span style="position:relative;top:2px">持续时间</span></td><td class="h" style="text-align:left;padding-left:39.5px"><span class="ic" style="margin-right:8px;position:relative;top:1px"><svg width="19" height="17" viewBox="0 0 19 17" fill="none" stroke="#777" stroke-width="1"><path d="M0.6 0.6 H6.4 L8 3 H18.4 V16.4 H0.6 Z"/><path d="M7.6 8 H14.4 M7.6 10.6 H14.4 M7.6 13.2 H14.4" stroke-width="0.9"/></svg></span><span style="position:relative;top:2px">文件大小</span></td></tr>
    <tr><td class="h l"><span class="ic"><svg width="17" height="19" viewBox="0 0 17 19" fill="none" stroke="#777" stroke-width="1"><path d="M0.6 0.6 H11.6 L16.4 5.2 V18.4 H0.6 Z"/><path d="M11.6 0.6 V5.2 H16.4"/><circle cx="8" cy="11.4" r="4"/><path d="M6.8 9.4 L10.2 11.4 L6.8 13.4 Z" stroke-width="0.9"/></svg></span><span>原始视频</span></td><td><span class="dv" style="left:0px;top:-1px">AVI</span></td><td><span class="dv" style="left:-1.5px;top:-1px;letter-spacing:0.4px">1280*720</span></td><td><span class="dv" style="left:0.5px">120分钟</span></td><td><span class="dv" style="left:-2.5px;top:-1px">2.5 GB</span></td></tr>
    <tr><td class="h l"><span class="ic"><svg width="19" height="17" viewBox="0 0 19 17" fill="none" stroke="#777" stroke-width="1.1"><path d="M6 2.6 H3.4 Q1 2.6 1 5 V13.6 Q1 16 3.4 16 H12.4 Q14.8 16 14.8 13.6 V10.4"/><path d="M6.4 11.6 Q6.6 5 14.4 4.6 M11.6 1 L15.6 4.6 L11.8 8.2"/></svg></span><span style="position:relative;left:-2px;top:-1.5px">输出格式</span></td><td><span class="dv" style="left:0px;top:-2px">MP4</span></td><td><span class="dv" style="left:-1.5px;top:-2px;letter-spacing:0.4px">1280*720</span></td><td><span class="dv" style="left:0.5px;top:-0.5px">120分钟</span></td><td></td></tr>
  </table>
  <div class="abs" style="left:35px;top:389px;width:745px;height:20px;background:#f5f5f5;border:1px solid #dcdcdc"></div>
  <div class="abs" style="left:35px;top:389px;width:373px;height:20px;background:#f5f5f5;border:1px solid #dcdcdc"></div>
  <div class="abs d12" style="left:199px;top:400px">功能性能</div>
  <div class="abs d12" style="left:573px;top:400px">高性能</div>
</div>
</body>
</html>
